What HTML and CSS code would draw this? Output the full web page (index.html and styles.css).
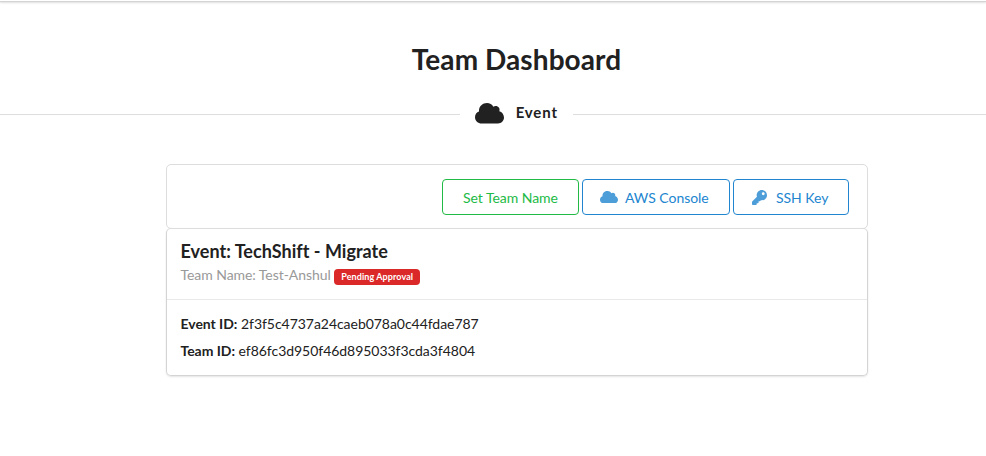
FILE: index.html
```html
<!DOCTYPE html>
<html lang="en">
<head>
<meta charset="utf-8">
<title>Team Dashboard</title>
<link rel="stylesheet" href="styles.css">
</head>
<body>
<header class="topbar"></header>
<main>
<h1 class="title">Team Dashboard</h1>
<div class="divider">
<svg class="divider-icon" viewBox="0 0 87 62" preserveAspectRatio="none"><path d="M73 25C76 16 70 9 62 9q-4 0-7 2C51 4 44 0 36 0 23 0 12 10 12 23v3C5 28 0 35 0 43c0 11 9 19 20 19h49c10 0 18-8 18-18 0-9-6-17-14-19z"/></svg>
<span>Event</span>
</div>
<div class="stack">
<section class="toolbar">
<button class="btn green"><span>Set Team Name</span></button>
<button class="btn blue"><svg class="cloud" viewBox="0 0 87 62" preserveAspectRatio="none"><path d="M73 25C76 16 70 9 62 9q-4 0-7 2C51 4 44 0 36 0 23 0 12 10 12 23v3C5 28 0 35 0 43c0 11 9 19 20 19h49c10 0 18-8 18-18 0-9-6-17-14-19z"/></svg><span>AWS Console</span></button>
<button class="btn blue key-btn"><svg class="key" viewBox="0 0 512 512"><path fill-rule="evenodd" d="M512 176c0 97.200-78.800 176-176 176-11.200 0-22.200-1.100-32.800-3.100l-24 27A24 24 0 0 1 261.200 384H224v40c0 13.300-10.700 24-24 24h-40v40c0 13.300-10.700 24-24 24H24c-13.300 0-24-10.700-24-24v-78.100c0-6.400 2.500-12.500 7-17l161.800-161.800C163 213.800 160 195.300 160 176 160 78.800 238.800 0 336 0s176 78.500 176 176zM336 128c0 26.500 21.500 48 48 48s48-21.500 48-48-21.500-48-48-48-48 21.500-48 48z"/></svg><span>SSH Key</span></button>
</section>
<section class="card">
<div class="card-head">
<h2>Event: TechShift - Migrate</h2>
<div class="meta">Team Name: Test-Anshul <span class="label">Pending Approval</span></div>
</div>
<div class="card-body">
<p><b>Event ID:</b> 2f3f5c4737a24caeb078a0c44fdae787</p>
<p><b>Team ID:</b> ef86fc3d950f46d895033f3cda3f4804</p>
</div>
</section>
</div>
</main>
</body>
</html>
```
FILE: styles.css
```css
* { box-sizing: border-box; }
body { margin: 0; height: 456px; overflow: hidden; background: #fff; color: #212121; font: 14px/20px Lato, sans-serif; }
.topbar { height: 2px; border-bottom: 1px solid #d4d4d5; box-shadow: 0 1px 2px rgba(34,36,38,.15); }
.title { margin: 39px 0 0 47px; text-align: center; font-size: 28px; line-height: 36px; font-weight: 700; letter-spacing: .08px; }
.divider { display: flex; align-items: center; height: 30px; margin-top: 21px; margin-right: -47px; font-size: 15px; font-weight: 700; letter-spacing: .85px; }
.divider::before, .divider::after { content: ""; flex: 1; height: 1px; margin-top: 2px; background: #dededf; }
.divider-icon { width: 29px; height: 20.500px; margin: 1px 11.500px 0 15px; fill: #212121; }
.divider span { margin-right: 15px; line-height: 20px; padding-bottom: 2px; }
.stack { width: 702px; margin: 36px 0 0 166px; }
.toolbar { display: flex; justify-content: flex-end; gap: 3px; height: 65px; padding: 14px 18px 0 0; border: 1px solid #dcdddd; border-radius: 5px; }
.btn { display: flex; align-items: center; height: 36px; padding: 0; border: 1px solid; border-radius: 4px; background: #fff; font: 14px/20px Lato, sans-serif; }
.btn span { padding-top: 2px; letter-spacing: -.04px; }
.green { width: 137px; justify-content: center; color: #21ba45; }
.blue { width: 148px; padding-left: 17px; color: #2185d0; }
.key-btn { width: 116px; }
.btn svg { fill: currentColor; opacity: .8; }
.cloud { width: 18px; height: 12.500px; margin-right: 7px; }
.key { width: 15px; height: 15px; margin: 1px 9px 0 1px; }
.card { height: 148px; margin-top: -1px; border: 1px solid #d4d4d5; border-top-color: #dcdddd; border-radius: 5px; box-shadow: 0 1px 2px rgba(34,36,38,.12); }
.card-head { height: 71px; padding: 11px 14px 0 13.500px; border-bottom: 1px solid #e8e9e9; }
h2 { margin: 0; font-size: 18px; line-height: 23px; letter-spacing: .02px; }
.meta { color: #999; line-height: 20px; margin-top: 2px; letter-spacing: -.06px; }
.label { display: inline-block; padding: 3px 7px; border-radius: 4px; background: #db2828; color: #fff; font-size: 9px; line-height: 10px; font-weight: 700; letter-spacing: .09px; vertical-align: 0; }
.card-body { padding: 14px 14px 14px 13.500px; }
p { margin: 0 0 7px; line-height: 20px; letter-spacing: -.04px; }
```
